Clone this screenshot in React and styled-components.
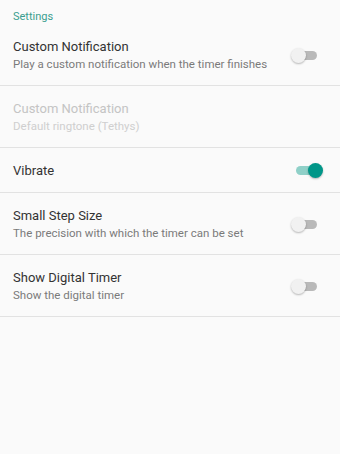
import React from 'react';
import styled, { createGlobalStyle } from 'styled-components';

const GlobalStyle = createGlobalStyle`
  html, body {
    margin: 0;
    padding: 0;
    background: #fafafa;
  }
  body {
    font-family: Roboto, 'Noto Sans', sans-serif;
  }
`;

const Screen = styled.div`
  width: 340px;
  min-height: 454px;
  background: #fafafa;
`;

const Header = styled.div`
  padding: 10px 13px 0;
  font-size: 11px;
  line-height: 14px;
  color: #3a9e8f;
`;

const Row = styled.div`
  display: flex;
  align-items: center;
  padding: 14px 23px 13px 13px;
  border-bottom: 1px solid #e2e2e2;
`;

const Texts = styled.div`
  flex: 1;
  display: flex;
  flex-direction: column;
`;

const Title = styled.div`
  font-size: 13px;
  line-height: 17px;
  color: ${({ disabled }) => (disabled ? '#c4c4c4' : '#333333')};
`;

const Summary = styled.div`
  font-size: 11.5px;
  line-height: 15px;
  margin-top: 2px;
  color: ${({ disabled }) => (disabled ? '#cfcfcf' : '#7a7a7a')};
`;

const Track = styled.div`
  position: relative;
  width: 21px;
  height: 9px;
  border-radius: 5px;
  margin-left: 8px;
  background: ${({ on }) => (on ? '#8fd0c8' : '#b9b9b9')};
`;

const Thumb = styled.div`
  position: absolute;
  top: -3px;
  left: ${({ on }) => (on ? '12px' : '-5px')};
  width: 15px;
  height: 15px;
  border-radius: 50%;
  background: ${({ on }) => (on ? '#009688' : '#f1f1f1')};
  box-shadow: 0 1px 2px rgba(0, 0, 0, 0.28);
`;

function Switch({ on }) {
  return (
    <Track on={on ? 1 : 0}>
      <Thumb on={on ? 1 : 0} />
    </Track>
  );
}

const items = [
  { title: 'Custom Notification', summary: 'Play a custom notification when the timer finishes', toggle: false },
  { title: 'Custom Notification', summary: 'Default ringtone (Tethys)', disabled: true },
  { title: 'Vibrate', toggle: true },
  { title: 'Small Step Size', summary: 'The precision with which the timer can be set', toggle: false },
  { title: 'Show Digital Timer', summary: 'Show the digital timer', toggle: false },
];

export default function App() {
  return (
    <Screen>
      <GlobalStyle />
      <Header>Settings</Header>
      {items.map((item, i) => (
        <Row key={i}>
          <Texts>
            <Title disabled={item.disabled}>{item.title}</Title>
            {item.summary && <Summary disabled={item.disabled}>{item.summary}</Summary>}
          </Texts>
          {item.toggle !== undefined && <Switch on={item.toggle} />}
        </Row>
      ))}
    </Screen>
  );
}
